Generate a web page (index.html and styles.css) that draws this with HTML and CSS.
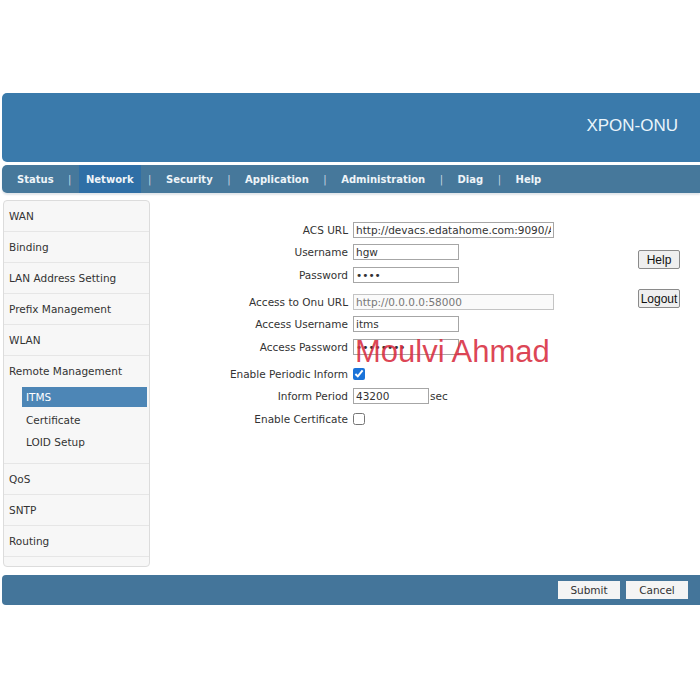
FILE: index.html
```html
<!DOCTYPE html>
<html>
<head>
<meta charset="utf-8">
<link rel="stylesheet" href="styles.css">
</head>
<body>
<div class="page">
  <div class="header"><span class="brand">XPON-ONU</span></div>
  <div class="nav">
    <span class="nav-item">Status</span><span class="sep">|</span>
    <span class="nav-item active">Network</span><span class="sep">|</span>
    <span class="nav-item">Security</span><span class="sep">|</span>
    <span class="nav-item">Application</span><span class="sep">|</span>
    <span class="nav-item">Administration</span><span class="sep">|</span>
    <span class="nav-item">Diag</span><span class="sep">|</span>
    <span class="nav-item">Help</span>
  </div>
  <div class="body">
    <div class="sidebar">
      <div class="side-item">WAN</div>
      <div class="side-item">Binding</div>
      <div class="side-item">LAN Address Setting</div>
      <div class="side-item">Prefix Management</div>
      <div class="side-item">WLAN</div>
      <div class="side-item open">Remote Management</div>
      <div class="sub-list">
        <div class="sub-item active">ITMS</div>
        <div class="sub-item">Certificate</div>
        <div class="sub-item">LOID Setup</div>
      </div>
      <div class="side-item">QoS</div>
      <div class="side-item">SNTP</div>
      <div class="side-item">Routing</div>
    </div>
    <div class="content">
      <div class="form">
        <label class="lbl">ACS URL</label><div class="fld"><input class="in wide" type="text" value="http://devacs.edatahome.com:9090/ACS-server/ACS"></div>
        <label class="lbl">Username</label><div class="fld"><input class="in" type="text" value="hgw"></div>
        <label class="lbl">Password</label><div class="fld"><input class="in" type="password" value="abcd"></div>
        <label class="lbl gap">Access to Onu URL</label><div class="fld gap"><input class="in wide dis" type="text" value="http://0.0.0.0:58000"></div>
        <label class="lbl">Access Username</label><div class="fld"><input class="in" type="text" value="itms"></div>
        <label class="lbl">Access Password</label><div class="fld"><input class="in" type="password" value="abcdefgh"></div>
        <label class="lbl gap">Enable Periodic Inform</label><div class="fld gap"><input class="cb" type="checkbox" checked></div>
        <label class="lbl">Inform Period</label><div class="fld"><input class="in short" type="text" value="43200"><span class="unit">sec</span></div>
        <label class="lbl">Enable Certificate</label><div class="fld"><input class="cb" type="checkbox"></div>
      </div>
      <div class="side-buttons">
        <button class="btn help">Help</button>
        <button class="btn">Logout</button>
      </div>
      <div class="watermark">Moulvi Ahmad</div>
    </div>
  </div>
  <div class="footer">
    <button class="fbtn">Submit</button>
    <button class="fbtn">Cancel</button>
  </div>
</div>
</body>
</html>
```
FILE: styles.css
```css
html, body {
  margin: 0;
  padding: 0;
  background: #ffffff;
}
.page {
  padding-top: 93px;
  font-family: "DejaVu Sans", Verdana, sans-serif;
  font-size: 10.5px;
  color: #333;
}
.header {
  margin-left: 2px;
  height: 69px;
  background: #3a7aab;
  border-radius: 5px 0 0 5px;
  display: flex;
  align-items: center;
  justify-content: flex-end;
  padding-right: 22px;
}
.brand {
  font-family: "Liberation Sans", Arial, sans-serif;
  font-size: 17px;
  color: #eaf5fb;
  margin-top: -3px;
}
.nav {
  margin-top: 3px;
  margin-left: 2px;
  height: 28px;
  background: #46789b;
  border-radius: 5px 0 0 5px;
  display: flex;
  align-items: stretch;
  padding-left: 8px;
  box-shadow: 0 2px 2px #e2e6ea;
}
.nav-item {
  display: flex;
  align-items: center;
  padding: 0 7px;
  font-weight: bold;
  color: #eef4f8;
  font-size: 10px;
}
.nav-item.active {
  background: #2f6fa6;
}
.sep {
  display: flex;
  align-items: center;
  color: #c7d6e1;
  padding: 0 7.5px;
  font-size: 10px;
}
.body {
  display: flex;
  margin-top: 7px;
}
.sidebar {
  margin-left: 3px;
  width: 145px;
  height: 365px;
  background: #f7f7f7;
  border: 1px solid #dcdcdc;
  border-radius: 4px;
  box-sizing: content-box;
}
.side-item {
  height: 30px;
  line-height: 30px;
  padding-left: 5px;
  border-bottom: 1px solid #e6e6e6;
  color: #333;
}
.side-item.open {
  border-bottom: none;
}
.sub-list {
  padding: 1px 2px 10px 18px;
  border-bottom: 1px solid #e6e6e6;
}
.sub-item {
  height: 22px;
  line-height: 22px;
  padding-left: 4px;
  color: #333;
}
.sub-item.active {
  background: #4d86b6;
  color: #ffffff;
  height: 20px;
  line-height: 20px;
  margin-bottom: 2px;
}
.content {
  flex: 1;
  position: relative;
  display: flex;
  justify-content: space-between;
  padding-top: 19px;
  padding-right: 20px;
}
.form {
  margin-left: 10px;
  display: grid;
  grid-template-columns: 188px auto;
  column-gap: 5px;
  grid-auto-rows: auto;
  align-content: start;
}
.lbl {
  height: 22.3px;
  display: flex;
  align-items: center;
  justify-content: flex-end;
  color: #333;
  white-space: nowrap;
}
.fld {
  height: 22.3px;
  display: flex;
  align-items: center;
}
.gap {
  padding-top: 5px;
}
.in {
  box-sizing: border-box;
  width: 106px;
  height: 16px;
  border: 1px solid #a6a6a6;
  padding: 0 2px;
  font-family: "DejaVu Sans", Verdana, sans-serif;
  font-size: 10.5px;
  color: #333;
  background: #fff;
  outline: none;
}
.in.wide {
  width: 201px;
}
.in.short {
  width: 76px;
}
.in.dis {
  color: #777;
  background: #fafafa;
  border-color: #c4c4c4;
}
.unit {
  margin-left: 1px;
  color: #333;
}
.cb {
  margin: 0;
  width: 12px;
  height: 12px;
  accent-color: #1a73d9;
}
.side-buttons {
  display: flex;
  flex-direction: column;
  align-items: flex-end;
  padding-top: 31px;
  gap: 20px;
}
.btn {
  width: 42px;
  height: 19px;
  padding: 0;
  font-family: "Liberation Sans", Arial, sans-serif;
  font-size: 12px;
  color: #111;
  background: #efefef;
  border: 1px solid #8a8a8a;
  border-radius: 2px;
}
.watermark {
  position: absolute;
  left: 205px;
  top: 134px;
  font-family: "Liberation Sans", Arial, sans-serif;
  font-size: 31px;
  color: rgba(216, 44, 62, 0.88);
  pointer-events: none;
  white-space: nowrap;
}
.footer {
  margin-top: 8px;
  margin-left: 2px;
  height: 30px;
  background: #44759a;
  border-radius: 4px 0 0 4px;
  display: flex;
  align-items: center;
  justify-content: flex-end;
  gap: 6px;
  padding-right: 12px;
}
.fbtn {
  width: 62px;
  height: 18px;
  padding: 0;
  border: none;
  background: #f4f4f4;
  font-family: "DejaVu Sans", Verdana, sans-serif;
  font-size: 10.5px;
  color: #333;
}
```
